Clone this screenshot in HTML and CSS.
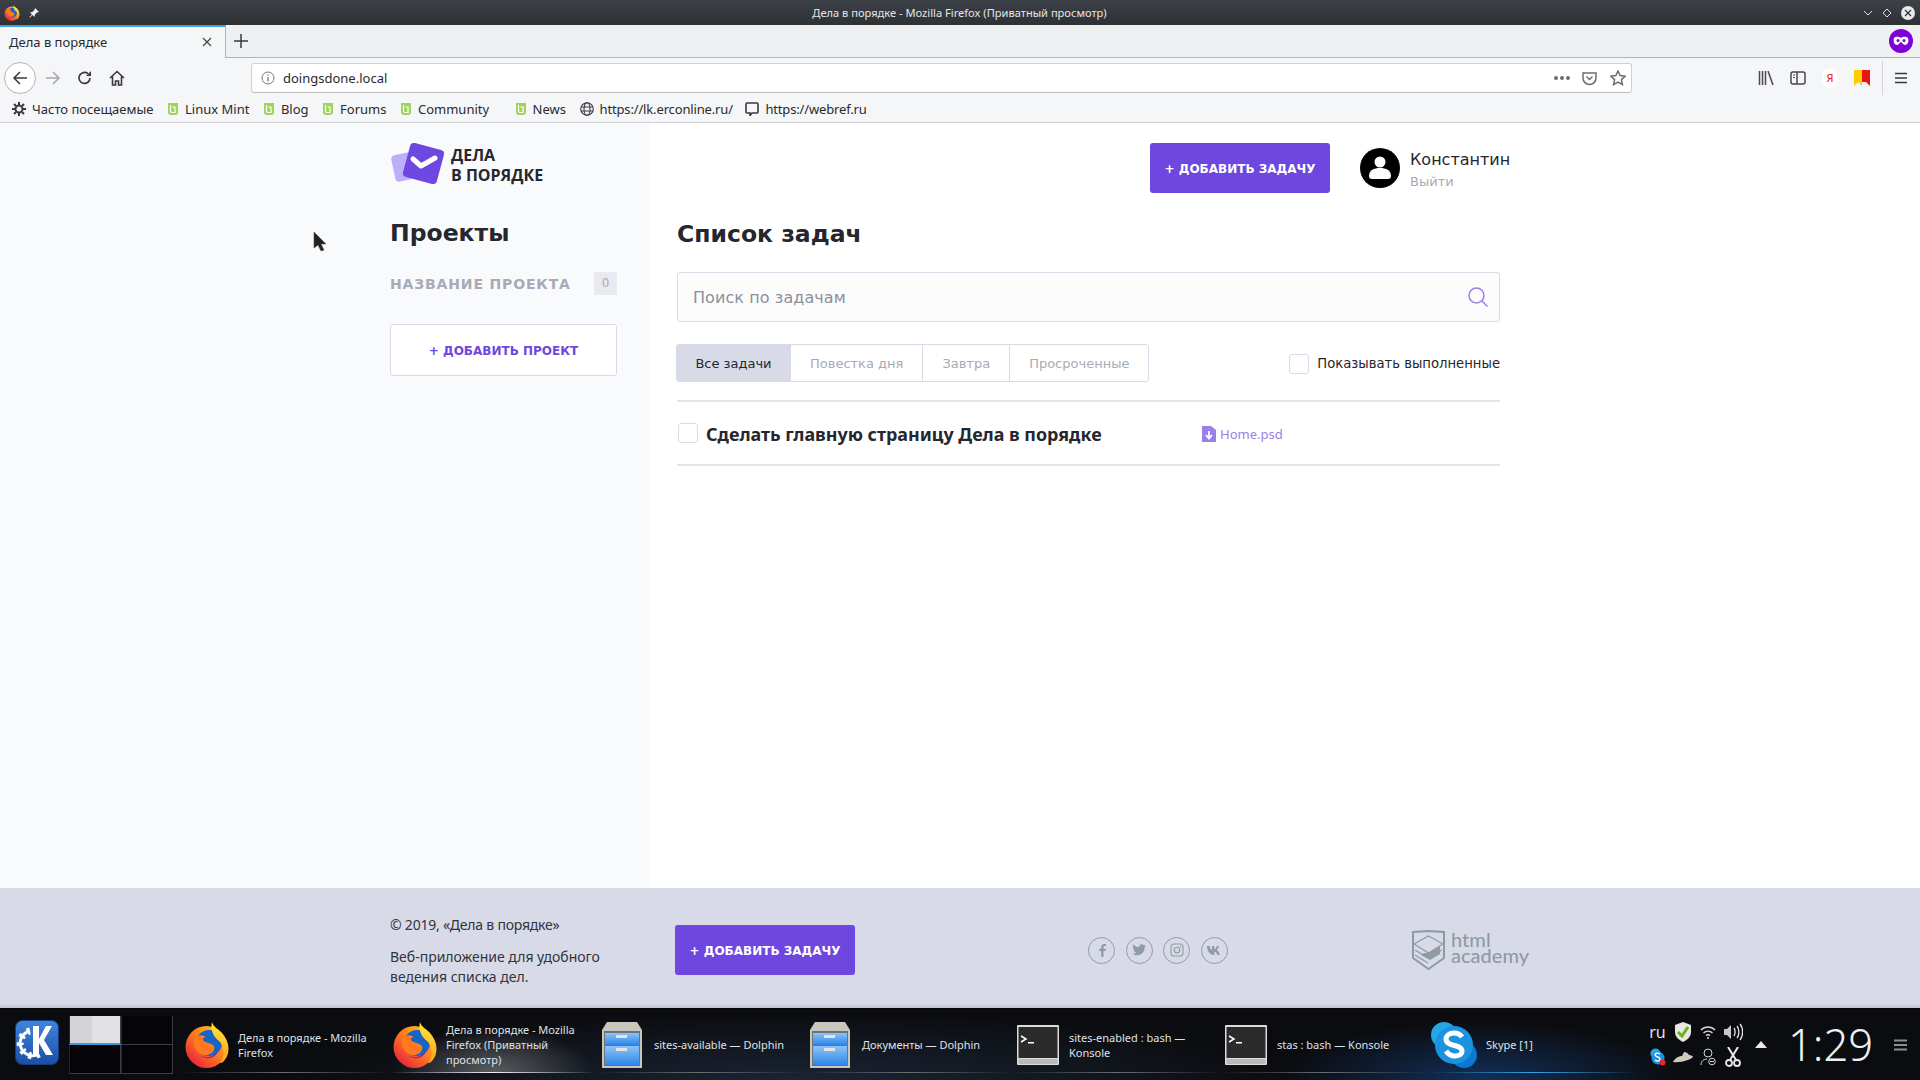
FILE: index.html
```html
<!DOCTYPE html>
<html lang="ru">
<head>
    <meta charset="UTF-8">
    <title>Дела в порядке</title>
    <link rel="stylesheet" href="styles.css">
</head>
<body>
    <svg class="sprite" width="0" height="0">
        <defs>
            <linearGradient id="ffBody" x1="0.9" y1="0.1" x2="0.2" y2="0.9">
                <stop offset="0" stop-color="#ffc22e"/>
                <stop offset="0.5" stop-color="#ff7a1f"/>
                <stop offset="1" stop-color="#ea2a3c"/>
            </linearGradient>
            <linearGradient id="ffTail" x1="0" y1="0" x2="0" y2="1">
                <stop offset="0" stop-color="#ffe93a"/>
                <stop offset="1" stop-color="#ffa01f"/>
            </linearGradient>
            <linearGradient id="drawer" x1="0" y1="0" x2="0" y2="1">
                <stop offset="0" stop-color="#8cc4f5"/>
                <stop offset="1" stop-color="#2f86ea"/>
            </linearGradient>
            <linearGradient id="kdeBg" x1="0" y1="0" x2="0" y2="1">
                <stop offset="0" stop-color="#3f86dc"/>
                <stop offset="1" stop-color="#1d4ea6"/>
            </linearGradient>
            <symbol id="firefox" viewBox="0 0 44 46">
                <circle cx="21.5" cy="25" r="21" fill="url(#ffBody)"/>
                <circle cx="24" cy="21" r="13" fill="#1565c8"/>
                <path d="M9 16c3-3 8-4 12-1-3 0-4 3-2 4 3 2 8 2 10 5 2 5-4 10-10 9-7-1-12-9-10-17z" fill="#ff7a1f"/>
                <path d="M27 0c1 5 8 8 12 14 6 8 6 18 0 25-2 2-3 2-4 2 5-7 5-16-1-22-5-4-9-10-7-19z" fill="url(#ffTail)"/>
                <path d="M15 33c6 4 14 2 18-4-2 7-11 10-18 4z" fill="#6b2fa8"/>
            </symbol>
            <symbol id="dolphin" viewBox="0 0 40 46">
                <path d="M5 0h30l5 8v38H0V8z" fill="#c9c6bd"/>
                <rect x="2" y="9" width="36" height="35" fill="#6e7178"/>
                <rect x="3" y="11" width="34" height="12" fill="url(#drawer)"/>
                <rect x="3" y="24" width="34" height="19" fill="url(#drawer)"/>
                <rect x="14" y="13" width="11" height="3" fill="#e4e4e4"/>
                <rect x="14" y="26" width="11" height="3" fill="#e4e4e4"/>
            </symbol>
            <symbol id="konsole" viewBox="0 0 42 40">
                <rect width="42" height="40" rx="1" fill="#dcdcdc"/>
                <rect x="1.5" y="2" width="39" height="31" fill="#2b2b2b"/>
                <rect x="1.5" y="34" width="39" height="5" fill="#b9b9b9"/>
                <path d="M4 11l5 3-5 3" fill="none" stroke="#fff" stroke-width="1.5"/>
                <rect x="11" y="17" width="6" height="1.5" fill="#fff"/>
            </symbol>
            <symbol id="mint" viewBox="0 0 12 14">
                <path d="M1 1h10v9a3 3 0 0 1-3 3H4a3 3 0 0 1-3-3z" fill="#9fd35c"/>
                <path d="M3.5 3v6A1.5 1.5 0 0 0 5 10.500h3V5H5.500" fill="none" stroke="#fff" stroke-width="1.2"/>
            </symbol>
        </defs>
    </svg>

    <!-- заголовок окна -->
    <div class="titlebar">
        <div class="titlebar-left">
            <svg class="titlebar-logo" width="16" height="16"><use href="#firefox"/></svg>
            <svg width="10" height="10" viewBox="0 0 10 10"><path d="M6 0l4 4-2 .6-2 2L5.500 9 3.600 7 1 9.600l-.6-.6L3 6.400 1 4.500 3.400 4l2-2z" fill="#f2f2f2"/></svg>
        </div>
        <div class="titlebar-title">Дела в порядке - Mozilla Firefox (Приватный просмотр)</div>
        <div class="titlebar-controls">
            <svg width="10" height="6" viewBox="0 0 10 6"><path d="M1 1l4 4 4-4" fill="none" stroke="#dfe1e3"/></svg>
            <svg width="10" height="10" viewBox="0 0 10 10"><path d="M5 1l4 4-4 4-4-4z" fill="none" stroke="#dfe1e3"/></svg>
            <span class="win-close"><svg width="8" height="8" viewBox="0 0 8 8"><path d="M1 1l6 6M7 1L1 7" stroke="#2f3237" stroke-width="1.2"/></svg></span>
        </div>
    </div>

    <!-- вкладки -->
    <div class="tabstrip">
        <div class="tab">
            <span>Дела в порядке</span>
            <svg width="10" height="10" viewBox="0 0 10 10"><path d="M1 1l8 8M9 1L1 9" stroke="#444" stroke-width="1.2"/></svg>
        </div>
        <svg class="tab-new" width="14" height="14" viewBox="0 0 14 14"><path d="M7 0v14M0 7h14" stroke="#3a3a3d" stroke-width="1.5"/></svg>
        <span class="private-mark">
            <svg width="16" height="10" viewBox="0 0 16 10"><path d="M1 2c3-2 5-1 7 0 2-1 4-2 7 0 1 3 0 7-3 7-2 0-3-3-4-3S6 9 4 9C1 9 0 5 1 2z" fill="#fff"/><circle cx="5" cy="4.5" r="1.5" fill="#8000d7"/><circle cx="11" cy="4.5" r="1.5" fill="#8000d7"/></svg>
        </span>
    </div>

    <!-- панель навигации -->
    <div class="navbar">
        <div class="nav-buttons">
            <span class="nav-back">
                <svg width="16" height="16" viewBox="0 0 16 16"><path d="M8 2L2 8l6 6M2 8h13" fill="none" stroke="#3a3a3d" stroke-width="1.5"/></svg>
            </span>
            <svg class="nav-forward" width="16" height="16" viewBox="0 0 16 16"><path d="M8 2l6 6-6 6M14 8H1" fill="none" stroke="#a8a8ab" stroke-width="1.5"/></svg>
            <svg class="nav-reload" width="16" height="16" viewBox="0 0 16 16"><path d="M13 8a5.500 5.500 0 1 1-2-4.300" fill="none" stroke="#3a3a3d" stroke-width="1.7"/><path d="M14 1v5H9z" fill="#3a3a3d"/></svg>
            <svg class="nav-home" width="16" height="16" viewBox="0 0 16 16"><path d="M1 8l7-6.500L15 8M3.500 6.500V15h3v-4h3v4h3V6.500" fill="none" stroke="#3a3a3d" stroke-width="1.6"/></svg>
        </div>
        <div class="urlbar">
            <svg width="14" height="14" viewBox="0 0 14 14"><circle cx="7" cy="7" r="6" fill="none" stroke="#77777a"/><path d="M7 6v4.500M7 3.500v1.300" stroke="#77777a" stroke-width="1.3"/></svg>
            <span class="url-text">doingsdone.local</span>
            <span class="url-dots"><i></i><i></i><i></i></span>
            <svg width="15" height="15" viewBox="0 0 15 15"><path d="M1 2h13v5a6.500 6.500 0 0 1-13 0z" fill="none" stroke="#6d6d70" stroke-width="1.5"/><path d="M4.500 5.500l3 3 3-3" fill="none" stroke="#6d6d70" stroke-width="1.5"/></svg>
            <svg width="16" height="16" viewBox="0 0 16 16"><path d="M8 1l2.100 4.600 5 .6-3.700 3.400 1 5L8 12.100 3.600 14.600l1-5L.9 6.200l5-.6z" fill="none" stroke="#6d6d70" stroke-width="1.5"/></svg>
        </div>
        <div class="nav-tools">
            <svg width="16" height="16" viewBox="0 0 16 16"><path d="M1.500 1v14M4.500 1v14M7.500 1v14M10 1l5 14" fill="none" stroke="#4a4a4f" stroke-width="1.5"/></svg>
            <svg width="16" height="16" viewBox="0 0 16 16"><rect x="1" y="2" width="14" height="12" rx="2" fill="none" stroke="#4a4a4f" stroke-width="1.5"/><path d="M7 2v12" stroke="#4a4a4f" stroke-width="1.5"/><path d="M3 5h2M3 7.500h2" stroke="#4a4a4f"/></svg>
            <span class="ya-mark">Я</span>
            <svg width="16" height="16" viewBox="0 0 16 16"><path d="M0 0h8v16l-4-4-4 4z" fill="#ffcc00"/><path d="M8 0h8v16l-4-4-4 0z" fill="#e8140f"/></svg>
            <span class="tools-sep"></span>
            <svg width="14" height="12" viewBox="0 0 14 12"><path d="M1 1.500h12M1 6h12M1 10.500h12" stroke="#3a3a3d" stroke-width="1.7"/></svg>
        </div>
    </div>

    <!-- закладки -->
    <div class="bookmarks">
        <a class="bookmark">
            <svg width="14" height="14" viewBox="0 0 14 14"><circle cx="7" cy="7" r="3.5" fill="none" stroke="#3a3a3d" stroke-width="2"/><path d="M7 0v3M7 11v3M0 7h3M11 7h3M2 2l2 2M10 10l2 2M12 2l-2 2M4 10l-2 2" stroke="#3a3a3d" stroke-width="2"/></svg>
            Часто посещаемые
        </a>
        <a class="bookmark"><svg width="12" height="14"><use href="#mint"/></svg>Linux Mint</a>
        <a class="bookmark"><svg width="12" height="14"><use href="#mint"/></svg>Blog</a>
        <a class="bookmark"><svg width="12" height="14"><use href="#mint"/></svg>Forums</a>
        <a class="bookmark bookmark-gap"><svg width="12" height="14"><use href="#mint"/></svg>Community</a>
        <a class="bookmark"><svg width="12" height="14"><use href="#mint"/></svg>News</a>
        <a class="bookmark bookmark-tight">
            <svg width="14" height="14" viewBox="0 0 14 14"><g fill="none" stroke="#3a3a3d" stroke-width="1.1"><circle cx="7" cy="7" r="6.3"/><ellipse cx="7" cy="7" rx="3" ry="6.3"/><path d="M1 5h12M1 9h12"/></g></svg>
            https://lk.erconline.ru/
        </a>
        <a class="bookmark bookmark-tight bookmark-last">
            <svg width="14" height="14" viewBox="0 0 14 14"><path d="M2 1h10a1 1 0 0 1 1 1v8a1 1 0 0 1-1 1H7l-2 2.500V11H2a1 1 0 0 1-1-1V2a1 1 0 0 1 1-1z" fill="none" stroke="#3a3a3d" stroke-width="1.6"/></svg>
            https://webref.ru
        </a>
    </div>

    <!-- страница -->
    <div class="page">
        <aside class="side">
            <div class="side-inner">
                <a class="logo">
                    <svg width="55" height="43" viewBox="0 0 55 43">
                        <rect x="3" y="11" width="27" height="27" rx="4" transform="rotate(-12 16 24)" fill="#bcaefb"/>
                        <rect x="16" y="4" width="35" height="35" rx="4" transform="rotate(15 33.500 21.500)" fill="#6e46e0"/>
                        <path d="M23 17l8 7 14-8" fill="none" stroke="#fff" stroke-width="5" stroke-linecap="round" stroke-linejoin="round"/>
                    </svg>
                    <span class="logo-text">ДЕЛА<br>В ПОРЯДКЕ</span>
                </a>
                <h2 class="side-title">Проекты</h2>
                <div class="project">
                    <a class="project-name">НАЗВАНИЕ ПРОЕКТА</a>
                    <span class="project-count">0</span>
                </div>
                <a class="btn-project">+ ДОБАВИТЬ ПРОЕКТ</a>
            </div>
        </aside>

        <main class="content">
            <header class="top">
                <a class="btn-add">+ ДОБАВИТЬ ЗАДАЧУ</a>
                <div class="user">
                    <svg width="40" height="40" viewBox="0 0 40 40">
                        <circle cx="20" cy="20" r="20" fill="#000"/>
                        <circle cx="20" cy="14" r="5.5" fill="#fff"/>
                        <path d="M9 28c0-6 5-8 11-8s11 2 11 8c0 2-1 3-3 3H12c-2 0-3-1-3-3z" fill="#fff"/>
                    </svg>
                    <div class="user-info">
                        <div class="user-name">Константин</div>
                        <a class="user-exit">Выйти</a>
                    </div>
                </div>
            </header>

            <h2 class="content-title">Список задач</h2>

            <div class="search">
                <span>Поиск по задачам</span>
                <svg width="20" height="20" viewBox="0 0 20 20"><circle cx="8.5" cy="8.5" r="7.5" fill="none" stroke="#9a7fe8" stroke-width="1.5"/><path d="M14 14l5.500 5.500" stroke="#9a7fe8" stroke-width="1.5"/></svg>
            </div>

            <div class="controls">
                <div class="filters">
                    <a class="filter filter-active">Все задачи</a>
                    <a class="filter">Повестка дня</a>
                    <a class="filter">Завтра</a>
                    <a class="filter">Просроченные</a>
                </div>
                <label class="show-done"><span class="check"></span>Показывать выполненные</label>
            </div>

            <div class="task">
                <span class="check"></span>
                <span class="task-name">Сделать главную страницу Дела в порядке</span>
                <a class="task-file">
                    <svg width="14" height="16" viewBox="0 0 14 16"><path d="M0 0h9l5 4v12H0z" fill="#9a7fe8"/><path d="M7 5v7M4 9l3 3.500L10 9" fill="none" stroke="#fff" stroke-width="1.8"/></svg>
                    Home.psd
                </a>
            </div>
        </main>
    </div>

    <!-- подвал -->
    <footer class="footer">
        <div class="footer-copy">
            <p class="copy-line">© 2019, «Дела в порядке»</p>
            <p>Веб-приложение для удобного<br>ведения списка дел.</p>
        </div>
        <a class="btn-add">+ ДОБАВИТЬ ЗАДАЧУ</a>
        <div class="social">
            <span class="social-item"><svg width="14" height="14" viewBox="0 0 14 14"><path d="M8.500 14V8h2l.3-2.300H8.500V4.200c0-.7.2-1.100 1.100-1.100H11V1c-.3 0-1-.1-1.800-.1C7.400.9 6.200 2 6.200 4v1.700h-2V8h2v6z" fill="#8f9ba2"/></svg></span>
            <span class="social-item"><svg width="14" height="12" viewBox="0 0 14 12"><path d="M14 1.500c-.5.2-1 .4-1.600.4.6-.4 1-.9 1.200-1.500-.5.3-1.100.6-1.800.7A2.800 2.800 0 0 0 7 3.200C4.700 3.100 2.600 2 1.200.3c-.8 1.300-.4 3 .9 3.800-.5 0-.9-.1-1.300-.3 0 1.300 1 2.500 2.300 2.800-.4.100-.9.100-1.300 0 .4 1.100 1.400 1.900 2.700 2C3.300 9.500 1.700 10 0 9.800 3.300 11.900 7.600 11.700 10.500 9 12.100 7.500 12.800 5.300 12.600 3c.6-.4 1-.9 1.400-1.500z" fill="#8f9ba2"/></svg></span>
            <span class="social-item"><svg width="14" height="14" viewBox="0 0 14 14"><rect x="1" y="1" width="12" height="12" rx="3" fill="none" stroke="#8f9ba2" stroke-width="1.1"/><circle cx="7" cy="7" r="2.8" fill="none" stroke="#8f9ba2" stroke-width="1.1"/><circle cx="10.5" cy="3.5" r=".7" fill="#8f9ba2"/></svg></span>
            <span class="social-item"><svg width="15" height="9" viewBox="0 0 15 9"><path d="M0 0h2.500c.5 2 1.600 4 2.500 4.300V0h2.300v3.300C8.200 3.200 9.300 1.600 9.800 0h2.300c-.4 1.900-1.600 3.300-2.500 3.900 1 .5 2.400 1.700 3.400 5h-2.500c-.6-1.700-1.700-3-3.200-3.200V9H7C3 9 .3 5.500 0 0z" fill="#8f9ba2"/></svg></span>
        </div>
        <a class="academy">
            <svg width="33" height="40" viewBox="0 0 33 40">
                <path d="M1 2l15.500-1L32 2v26l-15.500 11L1 28z" fill="none" stroke="#8f9ba2" stroke-width="2"/>
                <path d="M2 14l14.500-8L31 14l-14.500 9zM3 20l13 8 14-8M3 25l13 8" fill="none" stroke="#8f9ba2" stroke-width="1.2"/>
                <path d="M16 23l12-7v8l-10 6-9-5 3-2z" fill="#8f9ba2"/>
            </svg>
            <span class="academy-text">html<br>academy</span>
        </a>
    </footer>

    <!-- панель задач -->
    <div class="taskbar">
        <span class="kde">
            <svg width="44" height="45" viewBox="0 0 44 45">
                <rect x=".5" y=".5" width="43" height="44" rx="7" fill="url(#kdeBg)" stroke="#123c86"/>
                <path d="M15 11a12.500 12.500 0 1 0 9 23" fill="none" stroke="#fff" stroke-width="3"/>
                <path d="M15 11a12.500 12.500 0 1 0 9 23" fill="none" stroke="#fff" stroke-width="7" stroke-dasharray="3 5"/>
                <path d="M18 6h6v13l7-13h6l-8 14 9 15h-7l-7-12v12h-6z" fill="#fff"/>
            </svg>
        </span>
        <div class="pager">
            <span class="pager-cell pager-cell-active"></span>
            <span class="pager-cell"></span>
            <span class="pager-cell"></span>
            <span class="pager-cell"></span>
        </div>
        <div class="windows">
            <div class="window window-firefox">
                <svg width="44" height="46"><use href="#firefox"/></svg>
                <span>Дела в порядке - Mozilla Firefox</span>
            </div>
            <div class="window window-firefox window-active">
                <svg width="44" height="46"><use href="#firefox"/></svg>
                <span>Дела в порядке - Mozilla Firefox (Приватный просмотр)</span>
            </div>
            <div class="window window-dolphin">
                <svg width="40" height="46"><use href="#dolphin"/></svg>
                <span>sites-available — Dolphin</span>
            </div>
            <div class="window window-dolphin">
                <svg width="40" height="46"><use href="#dolphin"/></svg>
                <span>Документы — Dolphin</span>
            </div>
            <div class="window">
                <svg width="42" height="40"><use href="#konsole"/></svg>
                <span>sites-enabled : bash — Konsole</span>
            </div>
            <div class="window">
                <svg width="42" height="40"><use href="#konsole"/></svg>
                <span>stas : bash — Konsole</span>
            </div>
            <div class="window window-skype">
                <svg width="46" height="46" viewBox="0 0 46 46">
                    <circle cx="13" cy="13" r="13" fill="#27a6e5"/>
                    <circle cx="33" cy="33" r="13" fill="#0a78d4"/>
                    <circle cx="23" cy="23" r="19" fill="#1c93e0"/>
                    <path d="M31 15c-2-3-5-4-8-4-5 0-8 3-8 6 0 8 16 5 16 12 0 3-3 5-7 5-4 0-7-2-9-5" fill="none" stroke="#fff" stroke-width="5"/>
                </svg>
                <span>Skype [1]</span>
            </div>
        </div>
        <div class="tray">
            <span class="tray-lang">ru</span>
            <svg width="18" height="20" viewBox="0 0 18 20"><path d="M9 0l8 3v7c0 5-4 8-8 10-4-2-8-5-8-10V3z" fill="#e8e8e0"/><path d="M4 10l4 4 6-9" fill="none" stroke="#6fb023" stroke-width="3"/></svg>
            <svg width="16" height="14" viewBox="0 0 16 14"><path d="M1 5c4-4 10-4 14 0M3.500 8c2.500-2.500 6.500-2.500 9 0M6 10.500c1.200-1 2.800-1 4 0" fill="none" stroke="#d8d8d8" stroke-width="1.4"/><circle cx="8" cy="13" r="1" fill="#d8d8d8"/></svg>
            <svg width="20" height="18" viewBox="0 0 20 18"><path d="M1 6h3l4-4v14l-4-4H1z" fill="#c9c9c9"/><path d="M11 5c1.500 2 1.500 6 0 8M14 3c2.500 3 2.500 9 0 12M17 1c3.500 4 3.500 12 0 16" fill="none" stroke="#e4e4e4" stroke-width="1.3"/></svg>
            <svg width="16" height="18" viewBox="0 0 16 18"><circle cx="5.5" cy="5.5" r="5" fill="#27a6e5"/><circle cx="8" cy="10" r="6.5" fill="#1c93e0"/><path d="M10 6c-2-1.500-5-1-5 1s5 1.500 5 4-3 2.500-5 1" fill="none" stroke="#fff" stroke-width="1.4"/><circle cx="12.5" cy="14.5" r="3" fill="#e5262a"/></svg>
            <svg width="22" height="14" viewBox="0 0 22 14"><path d="M1 12c2-4 6-6 9-6l2-4c2 0 4 1 5 3 2 0 4 1 4 2-3 3-12 6-20 5z" fill="#cfcabb"/></svg>
            <svg width="16" height="18" viewBox="0 0 16 18"><circle cx="8" cy="5" r="4" fill="none" stroke="#d8d8d8"/><path d="M1 17c0-4 3-6 6-6" fill="none" stroke="#d8d8d8"/><circle cx="12" cy="13.5" r="3.3" fill="none" stroke="#d8d8d8"/><path d="M10 13.500h4" stroke="#d8d8d8"/></svg>
            <svg width="16" height="20" viewBox="0 0 16 20"><path d="M3 0l8 13M13 0L5 13" stroke="#e8e8e8" stroke-width="2"/><circle cx="4" cy="16" r="3" fill="none" stroke="#e8e8e8" stroke-width="1.8"/><circle cx="12" cy="16" r="3" fill="none" stroke="#e8e8e8" stroke-width="1.8"/></svg>
        </div>
        <svg class="tray-arrow" width="12" height="7" viewBox="0 0 12 7"><path d="M6 0l6 7H0z" fill="#e8e8e8"/></svg>
        <div class="clock">1:29</div>
        <svg class="panel-menu" width="13" height="12" viewBox="0 0 13 12"><path d="M0 1.500h13M0 6h13M0 10.500h13" stroke="#8b8e92" stroke-width="2"/></svg>
    </div>

    <!-- курсор -->
    <svg class="cursor" width="15" height="21" viewBox="0 0 15 21"><path d="M1 1v16l4-3 3 6 3-1-3-6h5z" fill="#222" stroke="#555" stroke-width=".6"/></svg>
</body>
</html>
```

FILE: styles.css
```css
* {
    box-sizing: border-box;
}

body {
    margin: 0;
    width: 1920px;
    height: 1080px;
    overflow: hidden;
    display: flex;
    flex-direction: column;
    position: relative;
    font-family: "DejaVu Sans", sans-serif;
    color: #26262e;
    background: #fff;
}

a {
    text-decoration: none;
}

p, h2 {
    margin: 0;
}

.sprite {
    position: absolute;
}

/* window title */
.titlebar {
    height: 25px;
    display: grid;
    grid-template-columns: 1fr auto 1fr;
    align-items: center;
    padding: 0 5px 0 4px;
    background: linear-gradient(#3d4148, #2e3134);
    color: #e4e6e8;
    font: 11.1px "Noto Sans", sans-serif;
}

.titlebar-left {
    display: flex;
    align-items: center;
    gap: 9px;
}

.titlebar-controls {
    display: flex;
    align-items: center;
    justify-content: flex-end;
    gap: 9px;
}

.win-close {
    width: 14px;
    height: 14px;
    border-radius: 50%;
    background: #e8e9ea;
    display: flex;
    align-items: center;
    justify-content: center;
}

/* tabs */
.tabstrip {
    height: 33px;
    display: flex;
    align-items: center;
    background: #eff0f2;
    border-bottom: 1px solid #b4b4b6;
}

.tab {
    width: 226px;
    height: 33px;
    display: flex;
    align-items: center;
    justify-content: space-between;
    padding: 0 13px 0 9px;
    background: #f5f6f7;
    border-top: 2px solid #3ea3e0;
    border-right: 1px solid #b4b4b6;
    font: 13px "Noto Sans", sans-serif;
    color: #2a2a2e;
}

.tab-new {
    margin-left: 8px;
}

.private-mark {
    margin-left: auto;
    margin-right: 7px;
    width: 24px;
    height: 24px;
    border-radius: 50%;
    background: #8000d7;
    display: flex;
    align-items: center;
    justify-content: center;
}

/* navigation */
.navbar {
    height: 40px;
    display: flex;
    align-items: center;
    background: #f5f6f7;
}

.nav-buttons {
    width: 251px;
    display: flex;
    align-items: center;
    padding-left: 4px;
}

.nav-back {
    width: 32px;
    height: 32px;
    border-radius: 50%;
    background: #fff;
    border: 1px solid #b4b4b6;
    display: flex;
    align-items: center;
    justify-content: center;
}

.nav-forward {
    margin-left: 9px;
}

.nav-reload,
.nav-home {
    margin-left: 16px;
}

.urlbar {
    width: 1381px;
    height: 30px;
    display: flex;
    align-items: center;
    padding: 0 5px 0 9px;
    background: #fff;
    border: 1px solid #d0d0d2;
    border-bottom-color: #bcbcbe;
    border-radius: 3px;
    font: 13px "Noto Sans", sans-serif;
    color: #2a2a2e;
}

.url-text {
    margin-left: 8px;
    flex: 1;
}

.url-dots {
    display: flex;
    gap: 2px;
    margin-right: 12px;
}

.url-dots i {
    width: 4px;
    height: 4px;
    border-radius: 50%;
    background: #6d6d70;
}

.urlbar svg:last-child {
    margin-left: 13px;
}

.nav-tools {
    flex: 1;
    display: flex;
    align-items: center;
    padding-left: 126px;
    gap: 16px;
}

.ya-mark {
    width: 16px;
    height: 20px;
    border-radius: 50%;
    background: #fff;
    color: #e8140f;
    font: 11px "Noto Sans", sans-serif;
    text-align: center;
    line-height: 20px;
}

.tools-sep {
    width: 1px;
    height: 34px;
    margin-left: -4px;
    margin-right: -5px;
    background: #d4d4d6;
}

/* bookmarks */
.bookmarks {
    height: 25px;
    display: flex;
    align-items: center;
    gap: 13.5px;
    padding-left: 12px;
    padding-bottom: 2px;
    background: #f5f6f7;
    border-bottom: 1px solid #cfcfd1;
    font: 13px "Noto Sans", sans-serif;
    color: #2a2a2e;
}

.bookmark {
    display: flex;
    align-items: center;
    gap: 6px;
}

.bookmark-gap {
    margin-right: 12px;
}

.bookmark-tight {
    letter-spacing: -.15px;
}

.bookmark-last {
    margin-left: -1px;
}

/* page */
.page {
    flex: 1;
    display: flex;
    position: relative;
}

.side {
    width: 650px;
    background: #f9fafc;
    padding-left: 390px;
}

.side-inner {
    width: 227px;
    padding-top: 19px;
}

.logo {
    display: flex;
    gap: 6px;
    height: 44px;
}

.logo-text {
    font: bold 16px/20px "Open Sans", sans-serif;
    color: #26262e;
    padding-top: 3px;
}

.side-title {
    margin-top: 32px;
    font-size: 23.5px;
    line-height: 30px;
    font-weight: bold;
}

.project {
    margin-top: 24px;
    height: 23px;
    display: flex;
    align-items: center;
    justify-content: space-between;
}

.project-name {
    font-size: 14px;
    font-weight: bold;
    letter-spacing: .85px;
    color: #a8aab6;
}

.project-count {
    width: 23px;
    height: 23px;
    background: #e8eaf0;
    color: #a8aab6;
    font-size: 12px;
    text-align: center;
    line-height: 23px;
}

.btn-project {
    margin-top: 29px;
    height: 52px;
    padding-top: 1px;
    display: flex;
    align-items: center;
    justify-content: center;
    background: #fff;
    border: 1px solid #d8dbe7;
    border-radius: 3px;
    color: #6e46e0;
    font-size: 12px;
    font-weight: bold;
}

.content {
    width: 823px;
    margin-left: 27px;
}

.top {
    height: 70px;
    padding-left: 473px;
    display: flex;
    align-items: flex-end;
    gap: 30px;
    width: 860px;
}

.btn-add {
    width: 180px;
    height: 50px;
    padding-top: 2px;
    display: flex;
    align-items: center;
    justify-content: center;
    background: #6e46e0;
    border-radius: 3px;
    color: #fff;
    font-size: 12px;
    font-weight: bold;
}

.user {
    display: flex;
    gap: 10px;
    align-items: center;
    height: 50px;
}

.user-name {
    font-size: 16px;
    line-height: 20px;
    margin-top: 2px;
}

.user-exit {
    display: block;
    margin-top: 4px;
    font-size: 13px;
    color: #a8aab6;
}

.content-title {
    margin-top: 26px;
    font-size: 23.5px;
    line-height: 30px;
    font-weight: bold;
}

.search {
    margin-top: 23px;
    height: 50px;
    display: flex;
    align-items: center;
    justify-content: space-between;
    padding: 0 11px 0 15px;
    background: #fcfcfd;
    border: 1px solid #d8dbe7;
    border-radius: 3px;
    color: #8d8f99;
    font-size: 16px;
    letter-spacing: .08px;
}

.controls {
    margin-top: 22px;
    height: 58px;
    display: flex;
    justify-content: space-between;
    border-bottom: 2px solid #e3e5ee;
}

.filters {
    height: 38px;
    display: flex;
    border: 1px solid #d8dbe7;
    border-radius: 3px;
    margin-left: -1px;
    font-size: 13px;
    color: #a8aab6;
}

.filter {
    display: flex;
    align-items: center;
    padding: 0 19px;
    border-left: 1px solid #d8dbe7;
}

.filter-active {
    width: 113px;
    justify-content: center;
    padding: 0;
    border-left: 0;
    background: #d8dbe7;
    color: #26262e;
}

.show-done {
    height: 38px;
    padding-top: 1px;
    display: flex;
    align-items: center;
    gap: 8px;
    font-size: 13.2px;
}

.check {
    width: 20px;
    height: 20px;
    background: #fff;
    border: 1px solid #d8dbe7;
    border-radius: 3px;
}

.task {
    height: 64px;
    display: flex;
    align-items: center;
    border-bottom: 2px solid #e3e5ee;
    padding-left: 1px;
}

.task-name {
    width: 496px;
    margin-left: 8px;
    margin-top: 1px;
    font: bold 17.9px "Noto Sans", sans-serif;
}

.task-file {
    display: flex;
    align-items: center;
    gap: 4px;
    margin-top: 2px;
    font: 13px "Noto Sans", sans-serif;
    color: #9a7fe8;
}

/* footer */
.footer {
    height: 120px;
    display: flex;
    align-items: center;
    padding-left: 390px;
    background: linear-gradient(#d8dbe7 96%, #c2c4cd);
}

.footer > * {
    margin-top: 4px;
}

.footer-copy {
    width: 285px;
    padding-top: 1px;
    font: 14px/20px "Noto Sans", sans-serif;
    color: #33333b;
}

.footer-copy p + p {
    margin-top: 12px;
}

.copy-line {
    letter-spacing: -.22px;
}

.social {
    display: flex;
    gap: 10.7px;
    margin-left: 233px;
}

.social-item {
    width: 27px;
    height: 27px;
    border: 1px solid #8f9ba2;
    border-radius: 50%;
    display: flex;
    align-items: center;
    justify-content: center;
}

.academy {
    margin-left: 184px;
    display: flex;
    align-items: center;
    gap: 6px;
}

.academy-text {
    font: 500 20px/16px Lato, sans-serif;
    color: #8f9ba2;
    margin-top: -6px;
}

/* desktop panel */
.taskbar {
    height: 72px;
    display: flex;
    align-items: center;
    background:
        radial-gradient(ellipse 200px 60px at 1480px 72px, #12305a, transparent),
        radial-gradient(ellipse 500px 70px at 800px 72px, #1a2433, transparent),
        #0b0c0f;
    border-top: 1px solid #050505;
    color: #dfe3e8;
    font: 11px/15px "Noto Sans", sans-serif;
}

.kde {
    display: flex;
    margin-left: 15px;
    margin-top: -5px;
}

.pager {
    width: 104px;
    margin-left: 10px;
    display: grid;
    grid-template-columns: 52px 52px;
    grid-template-rows: 29px 29px;
}

.pager-cell {
    border: 1px solid #3e3e42;
    border-top: 0;
    border-left-color: #25252a;
    background: #050507;
}

.pager-cell-active {
    background: linear-gradient(to right, #d4d4d6 43%, #e2e2e4 43%);
    border-bottom: 2px solid #3a9be0;
}

.windows {
    display: flex;
    margin-left: 8px;
}

.window {
    width: 208px;
    height: 71px;
    padding-left: 4px;
    display: flex;
    align-items: center;
    gap: 10px;
    background: linear-gradient(to right, transparent, #6a6d72 50%, transparent) no-repeat 0 63px / 100% 1px;
}

.window span {
    width: 140px;
}

.window-firefox {
    gap: 9px;
}

.window-dolphin {
    padding-left: 5px;
    gap: 12px;
}

.window-active {
    background:
        linear-gradient(to right, transparent, #f0f0f0 50%, transparent) no-repeat 0 63px / 100% 1px,
        radial-gradient(ellipse 100px 45px at 50% 64px, #5b5d60, transparent 100%) no-repeat 0 0 / 100% 64px;
}

.window-skype {
    padding-left: 2px;
    gap: 9px;
    background: linear-gradient(to right, transparent, #38a4e8 50%, transparent) no-repeat 0 63px / 100% 1px;
}

.tray {
    margin-left: 8px;
    width: 100px;
    display: grid;
    grid-template-columns: 25px 25px 25px 25px;
    grid-template-rows: 25px 25px;
    align-items: center;
    justify-items: center;
}

.tray-lang {
    font-size: 16px;
    color: #dfe3e8;
}

.tray-arrow {
    margin-left: 10px;
}

.clock {
    margin-left: 21px;
    font: 300 43.5px/1 "Noto Sans", sans-serif;
    color: #eef1f4;
}

.panel-menu {
    margin-left: 21px;
}

.cursor {
    position: absolute;
    left: 313px;
    top: 231px;
}
```
